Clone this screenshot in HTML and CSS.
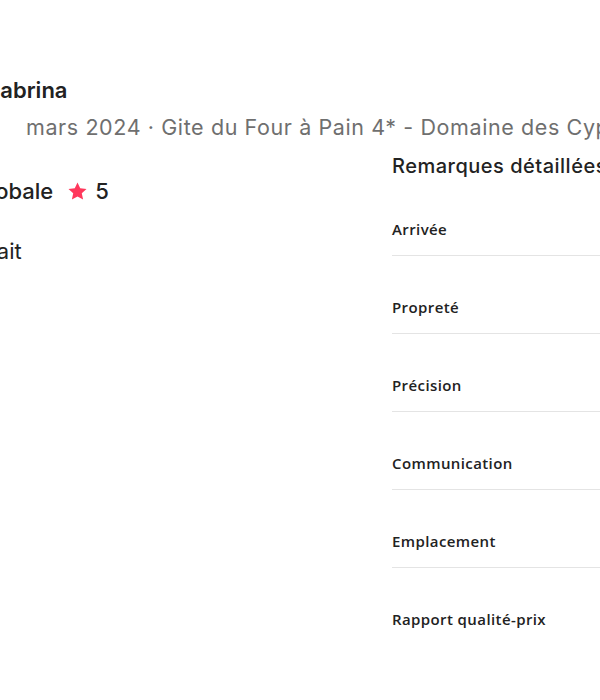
FILE: index.html
```html
<!DOCTYPE html>
<html lang="fr">
<head>
  <meta charset="UTF-8" />
  <meta name="viewport" content="width=device-width, initial-scale=1.0"/>
  <title>Avis - Sabrina</title>
  <link rel="stylesheet" href="styles.css">
</head>
<body>
  <div class="page">
    <div class="review-head">
      <div class="guest-name">Sabrina</div>
      <div class="stay-info">mars 2024 · Gite du Four à Pain 4* - Domaine des Cyprès</div>
    </div>

    <div class="columns">
      <div class="overall">
        <div class="overall-rating">
          Note globale
          <svg class="star" viewBox="0 0 24 24" width="21" height="21" aria-hidden="true">
            <path d="M12 1.8l3.1 6.6 7.2.8-5.4 4.9 1.5 7.1L12 17.6l-6.4 3.6 1.5-7.1-5.4-4.9 7.2-.8z"/>
          </svg>
          <span>5</span>
        </div>
        <p class="comment">Parfait</p>
      </div>

      <div class="details">
        <h2>Remarques détaillées</h2>
        <div class="detail-row">Arrivée</div>
        <div class="detail-row">Propreté</div>
        <div class="detail-row">Précision</div>
        <div class="detail-row">Communication</div>
        <div class="detail-row">Emplacement</div>
        <div class="detail-row last">Rapport qualité-prix</div>
      </div>
    </div>
  </div>
</body>
</html>
```

FILE: styles.css
```css
body {
  margin: 0;
  background: #fff;
  color: #222;
  font-family: Inter, "Noto Sans", sans-serif;
  overflow: hidden;
}
.page {
  margin-left: -76px;
  padding-top: 76px;
  width: 1000px;
}
.guest-name {
  padding-left: 62px;
  font-size: 22px;
  line-height: 28px;
  font-weight: 600;
}
.stay-info {
  margin-top: 10px;
  padding-left: 102px;
  font-size: 21.5px;
  line-height: 26px;
  letter-spacing: 0.6px;
  color: #6f6f6f;
  white-space: nowrap;
}
.columns {
  display: flex;
  margin-top: 14px;
}
.overall {
  width: 468px;
  flex-shrink: 0;
}
.overall-rating {
  display: flex;
  align-items: center;
  margin-top: 24px;
  margin-left: -4px;
  font-size: 22px;
  line-height: 26px;
  font-weight: 500;
}
.star {
  fill: #ff385c;
  margin: 0 7px 0 14px;
}
.comment {
  margin: 34px 0 0 30px;
  font-size: 22px;
  line-height: 26px;
}
.details {
  width: 320px;
}
.details h2 {
  margin: 0;
  font-size: 20px;
  line-height: 24px;
  letter-spacing: 0.5px;
  font-weight: 500;
  white-space: nowrap;
}
.detail-row {
  padding: 41px 0 16px;
  border-bottom: 1px solid #e4e4e4;
  font-family: "Open Sans", sans-serif;
  font-size: 15px;
  line-height: 20px;
  letter-spacing: 0.4px;
  font-weight: 600;
}
.detail-row.last {
  border-bottom: none;
}
```
